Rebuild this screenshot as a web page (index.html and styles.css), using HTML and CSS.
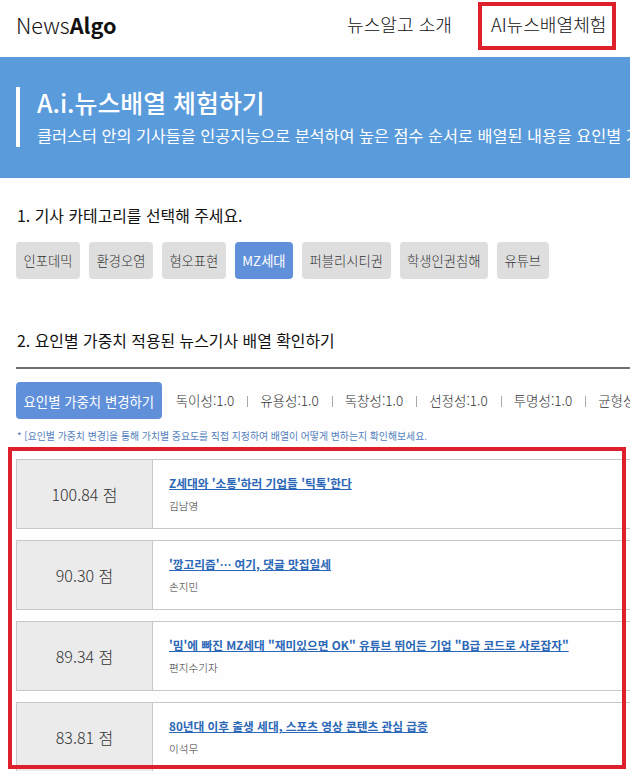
FILE: index.html
```html
<!DOCTYPE html>
<html lang="ko">
<head>
<meta charset="utf-8">
<title>NewsAlgo</title>
<link rel="stylesheet" href="styles.css">
</head>
<body>
<header class="top">
  <a class="logo">News<b>Algo</b></a>
  <nav class="nav"><a class="intro">뉴스알고 소개</a><a class="trial">AI뉴스배열체험</a></nav>
</header>
<section class="hero">
  <div class="hero-inner">
    <h1>A.i.뉴스배열 체험하기</h1>
    <p>클러스터 안의 기사들을 인공지능으로 분석하여 높은 점수 순서로 배열된 내용을 요인별 가</p>
  </div>
</section>
<main class="content">
  <h2>1. 기사 카테고리를 선택해 주세요.</h2>
  <div class="chips">
    <span class="chip">인포데믹</span><span class="chip">환경오염</span><span class="chip">혐오표현</span><span class="chip active">MZ세대</span><span class="chip">퍼블리시티권</span><span class="chip">학생인권침해</span><span class="chip">유튜브</span>
  </div>
  <h2 class="second">2. 요인별 가중치 적용된 뉴스기사 배열 확인하기</h2>
  <div class="weights">
    <span class="chip active change">요인별 가중치 변경하기</span>
    <ul class="factors"><li>독이성:1.0</li><li>유용성:1.0</li><li>독창성:1.0</li><li>선정성:1.0</li><li>투명성:1.0</li><li>균형성</li></ul>
  </div>
  <p class="note">* [요인별 가중치 변경]을 통해 가치별 중요도를 직접 지정하여 배열이 어떻게 변하는지 확인해보세요.</p>
  <div class="list">
    <article class="row"><div class="score">100.84 점</div><div class="info"><a>Z세대와 '소통'하러 기업들 '틱톡'한다</a><span>김남영</span></div></article>
    <article class="row"><div class="score">90.30 점</div><div class="info"><a>'깡고리즘'… 여기, 댓글 맛집일세</a><span>손지민</span></div></article>
    <article class="row"><div class="score">89.34 점</div><div class="info"><a>'밈'에 빠진 MZ세대 "재미있으면 OK" 유튜브 뛰어든 기업 "B급 코드로 사로잡자"</a><span>편지수기자</span></div></article>
    <article class="row"><div class="score">83.81 점</div><div class="info"><a>80년대 이후 출생 세대, 스포츠 영상 콘텐츠 관심 급증</a><span>이석무</span></div></article>
    <div class="highlight"></div>
  </div>
</main>
</body>
</html>
```

FILE: styles.css
```css
* { box-sizing: border-box; }
body {
  margin: 0;
  height: 771px;
  overflow: hidden;
  background: #fefefe;
  color: #222;
  font-family: "Noto Sans CJK KR", sans-serif;
  white-space: nowrap;
}
h1, h2, p, ul { margin: 0; padding: 0; }
.top {
  height: 57px;
  padding: 2px 14px 0 16px;
  display: flex;
  justify-content: space-between;
  align-items: flex-start;
}
.logo { font-size: 21.7px; line-height: 45px; font-weight: 300; color: #111; }
.logo b { font-weight: 700; }
.nav { display: flex; gap: 26px; font-size: 18.1px; font-weight: 300; line-height: 36px; color: #111; }
.intro { padding-top: 4px; }
.trial { width: 138px; height: 48px; padding: 0 0 0 9px; border: 4px solid #de1f2c; }
.hero { height: 121px; padding: 30px 0 0 16px; background: #5a9bdb; color: #fff; overflow: hidden; }
.hero-inner { height: 60px; padding-left: 17px; border-left: 4px solid #fff; }
.hero h1 { font-size: 24.9px; line-height: 31px; font-weight: 500; }
.hero p { font-size: 16.27px; line-height: 34px; font-weight: 400; }
.content { padding: 26px 0 0 16px; overflow: hidden; height: 593px; }
.content h2 { padding-left: 1px; font-size: 15.9px; line-height: 24px; font-weight: 400; color: #111; }
.chips { display: flex; gap: 9px; margin-top: 14px; }
.chip {
  height: 37px;
  padding: 0 7.5px;
  border-radius: 4px;
  background: #dedede;
  color: #333;
  font-size: 13.3px;
  line-height: 38px;
  font-weight: 300;
}
.chip.active { background: #6090da; color: #fff; font-weight: 400; }
.chip.change { font-size: 13.4px; }
.content .second { margin-top: 50px; }
.weights {
  display: flex;
  margin-top: 14px;
  padding-top: 13px;
  border-top: 2px solid #707070;
}
.factors { display: flex; margin-left: 14px; list-style: none; font-size: 13.5px; line-height: 37px; font-weight: 300; color: #333; }
.factors li + li::before {
  content: "";
  display: inline-block;
  width: 1px;
  height: 11px;
  margin: 0 12px 0 13px;
  background: #aaa;
  vertical-align: -1px;
}
.note { margin: 8px 0 0 1px; font-size: 9.87px; line-height: 18px; color: #527fbd; }
.list { position: relative; margin-top: 14px; display: flex; flex-direction: column; gap: 11px; }
.row { display: flex; height: 70px; border: 1px solid #c8c8c8; border-right: 0; flex: none; }
.score { width: 136px; border-right: 1px solid #c8c8c8; background: #ebebeb; color: #333; font-size: 16px; line-height: 69px; font-weight: 300; text-align: center; }
.info { display: flex; flex-direction: column; align-items: flex-start; padding: 11px 0 0 16px; }
.info a { font-size: 11.7px; line-height: 24px; font-weight: 700; color: #2b67b7; text-decoration: underline; }
.info span { font-size: 10.6px; line-height: 22px; color: #333; font-weight: 300; }
.highlight { position: absolute; left: -8px; top: -12px; width: 618px; height: 322px; border: 4px solid #de1f2c; }
```
